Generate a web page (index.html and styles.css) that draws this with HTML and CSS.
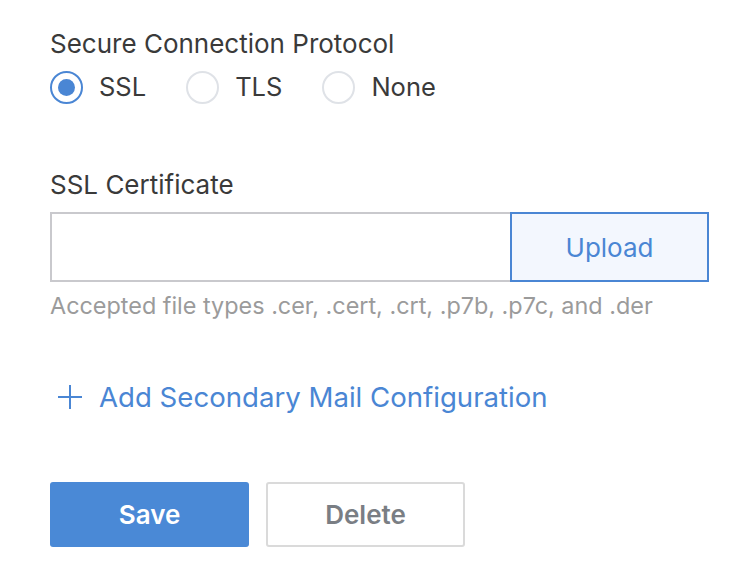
FILE: index.html
```html
<!DOCTYPE html>
<html>
<head>
<meta charset="utf-8">
<link rel="stylesheet" href="styles.css">
</head>
<body>
<div class="form">
  <div class="label">Secure Connection Protocol</div>
  <div class="radios">
    <label class="radio"><span class="circle checked"></span><span class="rtext">SSL</span></label>
    <label class="radio"><span class="circle"></span><span class="rtext">TLS</span></label>
    <label class="radio"><span class="circle"></span><span class="rtext">None</span></label>
  </div>
  <div class="label cert-label">SSL Certificate</div>
  <div class="upload-row">
    <div class="file-input"></div>
    <div class="upload-btn">Upload</div>
  </div>
  <div class="help">Accepted file types .cer, .cert, .crt, .p7b, .p7c, and .der</div>
  <div class="add-link">
    <svg class="plus" width="26" height="26" viewBox="0 0 26 26"><path d="M13 1V25M1 13H25" stroke="#4a86d4" stroke-width="2" fill="none"/></svg>
    <span>Add Secondary Mail Configuration</span>
  </div>
  <div class="actions">
    <div class="btn btn-primary">Save</div>
    <div class="btn btn-secondary">Delete</div>
  </div>
</div>
</body>
</html>
```
FILE: styles.css
```css
html, body {
  margin: 0;
  padding: 0;
  background: #ffffff;
}
body {
  font-family: Inter, "Open Sans", sans-serif;
  color: #3a3a3a;
}
.form {
  padding: 29px 0 0 50px;
  display: flex;
  flex-direction: column;
  align-items: flex-start;
}
.label {
  font-size: 26px;
  line-height: 30px;
  color: #3a3a3a;
}
.radios {
  display: flex;
  align-items: center;
  gap: 40px;
  margin-top: 11px;
  height: 34px;
}
.radio {
  display: flex;
  align-items: center;
  gap: 16px;
}
.circle {
  width: 33px;
  height: 33px;
  box-sizing: border-box;
  border: 2px solid #dfe2e7;
  border-radius: 50%;
  display: flex;
  align-items: center;
  justify-content: center;
}
.circle.checked {
  border-color: #4a86d4;
}
.circle.checked::after {
  content: "";
  width: 17px;
  height: 17px;
  border-radius: 50%;
  background: #4a86d4;
}
.rtext {
  font-size: 25.5px;
  line-height: 30px;
  color: #3a3a3a;
}
.cert-label {
  margin-top: 66px;
}
.upload-row {
  display: flex;
  margin-top: 12px;
  height: 70px;
}
.file-input {
  width: 460px;
  box-sizing: border-box;
  border: 2px solid #c9c9cd;
  border-right: none;
}
.upload-btn {
  width: 199px;
  box-sizing: border-box;
  border: 2px solid #4a86d4;
  background: #f3f7fe;
  color: #4a86d4;
  font-size: 26px;
  display: flex;
  align-items: center;
  justify-content: center;
}
.help {
  margin-top: 11px;
  font-size: 23.4px;
  line-height: 26px;
  color: #9b9b9b;
}
.add-link {
  margin-top: 61px;
  display: flex;
  align-items: center;
  gap: 16px;
  color: #4a86d4;
  font-size: 27.6px;
  line-height: 34px;
  padding-left: 7px;
}
.plus {
  display: block;
}
.actions {
  display: flex;
  gap: 17px;
  margin-top: 68px;
}
.btn {
  width: 199px;
  height: 65px;
  box-sizing: border-box;
  border-radius: 3px;
  display: flex;
  align-items: center;
  justify-content: center;
  font-size: 26px;
}
.btn-primary {
  background: #4a89d6;
  color: #ffffff;
  font-weight: 600;
}
.btn-secondary {
  background: #ffffff;
  border: 2px solid #dadada;
  color: #7a7e84;
  font-weight: 600;
}
```
